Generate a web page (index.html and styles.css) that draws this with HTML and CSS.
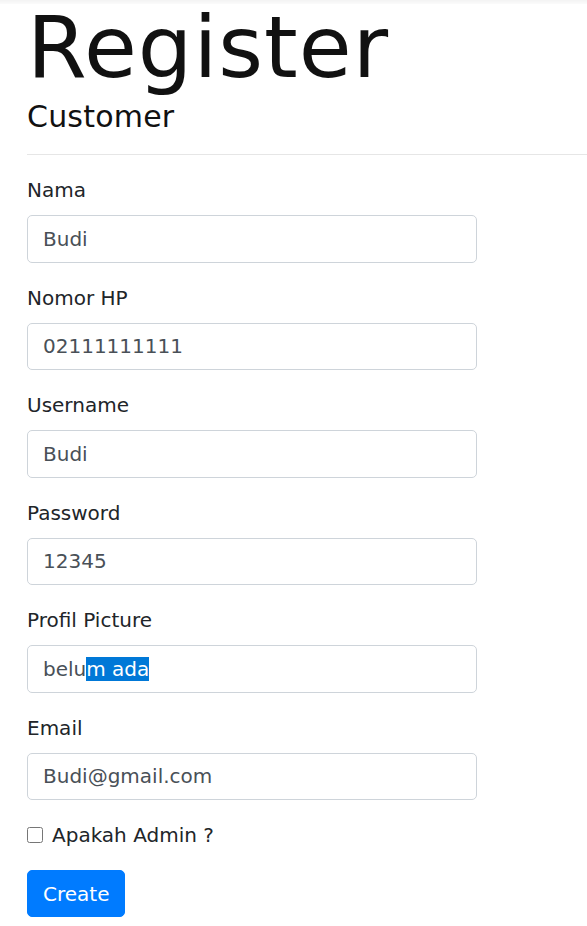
FILE: index.html
```html
<!DOCTYPE html>
<html lang="id">
<head>
<meta charset="utf-8">
<title>Register Customer</title>
<link rel="stylesheet" href="styles.css">
</head>
<body>
<div class="topband"></div>
<main class="container">
  <header class="page-head">
    <h1 class="title">Register</h1>
    <h4 class="subtitle">Customer</h4>
  </header>
  <hr class="divider">
  <form class="form">
    <div class="form-group">
      <label class="label" for="nama">Nama</label>
      <input class="control" id="nama" type="text" value="Budi">
    </div>
    <div class="form-group">
      <label class="label" for="hp">Nomor HP</label>
      <input class="control" id="hp" type="text" value="02111111111">
    </div>
    <div class="form-group">
      <label class="label" for="username">Username</label>
      <input class="control" id="username" type="text" value="Budi">
    </div>
    <div class="form-group">
      <label class="label" for="password">Password</label>
      <input class="control" id="password" type="text" value="12345">
    </div>
    <div class="form-group">
      <label class="label" for="pic">Profil Picture</label>
      <input class="control" id="pic" type="text" value="belum ada">
    </div>
    <div class="form-group">
      <label class="label" for="email">Email</label>
      <input class="control" id="email" type="text" value="Budi@gmail.com">
    </div>
    <div class="form-group check-row">
      <input class="check" id="admin" type="checkbox">
      <label class="check-label" for="admin">Apakah Admin ?</label>
    </div>
    <button class="btn" type="button">Create</button>
  </form>
</main>
<script src="app.js"></script>
</body>
</html>
```
FILE: styles.css
```css
* { box-sizing: border-box; }
html, body { margin: 0; padding: 0; background: #fff; }
body {
  font-family: "DejaVu Sans", "Noto Sans", sans-serif;
  color: #212529;
  font-size: 20px;
}
.topband {
  height: 4px;
  background: linear-gradient(#f3f3f3, #fbfbfb);
}
.container {
  padding-left: 27px;
}
.title {
  margin: 0;
  font-weight: 400;
  font-size: 86px;
  line-height: 1;
  letter-spacing: 1px;
  color: #111;
}
.subtitle {
  margin: 12px 0 0;
  font-weight: 400;
  font-size: 30px;
  line-height: 1;
  letter-spacing: 0.2px;
  color: #111;
}
.divider {
  margin: 22px 0 0;
  border: 0;
  border-top: 1px solid #e6e6e6;
  height: 0;
}
.form {
  padding-top: 20px;
  width: 450px;
}
.form-group {
  margin-bottom: 20px;
}
.label {
  display: block;
  line-height: 30px;
  margin-bottom: 10px;
  font-size: 20px;
}
.control {
  display: block;
  width: 450px;
  height: 47.5px;
  padding: 7.5px 15px;
  font-family: inherit;
  font-size: 20px;
  color: #495057;
  background: #fff;
  border: 1px solid #ced4da;
  border-radius: 5px;
  outline: none;
}
.control:focus { outline: none; box-shadow: none; border-color: #ced4da; }
.control::selection { background: #0078d7; color: #fff; }
.check-row {
  display: flex;
  align-items: center;
  gap: 9px;
  height: 30px;
}
.check {
  margin: 0;
  width: 16px;
  height: 16px;
}
.check-label {
  line-height: 30px;
}
.btn {
  display: block;
  height: 47px;
  padding: 0 15px;
  font-family: inherit;
  font-size: 20px;
  color: #fff;
  background: #007bff;
  border: 1px solid #007bff;
  border-radius: 5px;
}
```
FILE: app.js
```js
var pic = document.getElementById('pic');
pic.focus();
pic.setSelectionRange(4, 9);
```
